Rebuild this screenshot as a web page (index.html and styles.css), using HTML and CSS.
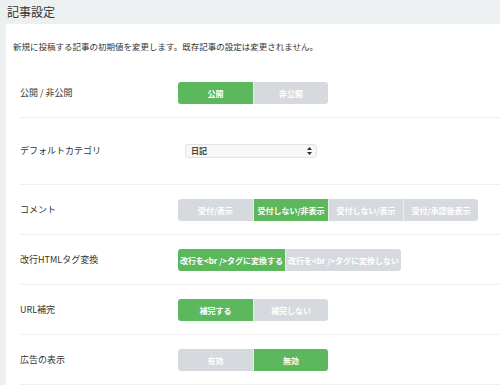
FILE: index.html
```html
<!DOCTYPE html>
<html lang="ja">
<head>
<meta charset="utf-8">
<title>記事設定</title>
<link rel="stylesheet" href="styles.css">
</head>
<body>
<h1 class="title">記事設定</h1>
<div class="panel">
  <p class="desc">新規に投稿する記事の初期値を変更します。既存記事の設定は変更されません。</p>
  <div class="rows">
    <div class="row">
      <div class="label">公開 / 非公開</div>
      <div class="group">
        <span class="btn on">公開</span>
        <span class="btn">非公開</span>
      </div>
    </div>
    <div class="row tall">
      <div class="label">デフォルトカテゴリ</div>
      <div class="select">
        <select class="sel"><option>日記</option></select>
        <svg class="arrows" width="5" height="8" viewBox="0 0 5 8"><path d="M2.5 0L5 3H0z M2.5 8L5 5H0z" fill="#333"/></svg>
      </div>
    </div>
    <div class="row">
      <div class="label">コメント</div>
      <div class="group">
        <span class="btn">受付/表示</span>
        <span class="btn on">受付しない/非表示</span>
        <span class="btn">受付しない/表示</span>
        <span class="btn">受付/承認後表示</span>
      </div>
    </div>
    <div class="row">
      <div class="label">改行HTMLタグ変換</div>
      <div class="group">
        <span class="btn on">改行を&lt;br /&gt;タグに変換する</span>
        <span class="btn">改行を&lt;br /&gt;タグに変換しない</span>
      </div>
    </div>
    <div class="row">
      <div class="label">URL補完</div>
      <div class="group">
        <span class="btn on">補完する</span>
        <span class="btn">補完しない</span>
      </div>
    </div>
    <div class="row">
      <div class="label">広告の表示</div>
      <div class="group">
        <span class="btn">有効</span>
        <span class="btn on">無効</span>
      </div>
    </div>
  </div>
</div>
</body>
</html>
```
FILE: styles.css
```css
html, body {
  margin: 0;
  padding: 0;
}
body {
  background: #edf0f1;
  font-family: "Noto Sans CJK JP", "Noto Sans", sans-serif;
  color: #333;
}
.title {
  margin: 0;
  padding: 6px 7px;
  height: 12px;
  font-size: 12px;
  line-height: 12px;
  font-weight: normal;
  color: #333;
}
.panel {
  margin-left: 6px;
  background: #fff;
  padding: 17px 0 0 7px;
  min-height: calc(100vh - 24px);
  box-sizing: border-box;
}
.desc {
  margin: 0 0 17px;
  font-size: 8.5px;
  line-height: 10px;
  color: #333;
}
.rows {
  margin-left: 7px;
}
.row {
  display: flex;
  align-items: center;
  padding: 14px 0 13px;
  border-bottom: 1px solid #eff0f1;
}
.row.tall {
  padding: 26px 0;
}
.label {
  width: 158px;
  flex: none;
  font-size: 9px;
  line-height: 12px;
  color: #333;
}
.group {
  display: flex;
  border-radius: 3px;
  overflow: hidden;
}
.btn {
  min-width: 75px;
  height: 22px;
  box-sizing: border-box;
  padding: 0 2px;
  display: flex;
  align-items: center;
  justify-content: center;
  background: #d6d9dd;
  color: #fff;
  font-size: 8px;
  font-weight: bold;
  white-space: nowrap;
  border-left: 1px solid #e9ebed;
}
.btn:first-child {
  border-left: none;
}
.btn.on {
  background: #5cb85c;
}
.select {
  margin-left: 7px;
  width: 132px;
  height: 14px;
  box-sizing: border-box;
  display: flex;
  align-items: center;
  border: 1px solid #e2e2e2;
  border-radius: 3px;
  background: #f7f7f7;
  padding: 0 4px 0 5px;
}
.sel {
  flex: 1;
  appearance: none;
  -webkit-appearance: none;
  border: none;
  background: transparent;
  padding: 0;
  margin: 0;
  font-family: inherit;
  font-size: 8px;
  font-weight: bold;
  color: #444;
  height: 12px;
  line-height: 12px;
  outline: none;
}
.arrows {
  flex: none;
}
```
